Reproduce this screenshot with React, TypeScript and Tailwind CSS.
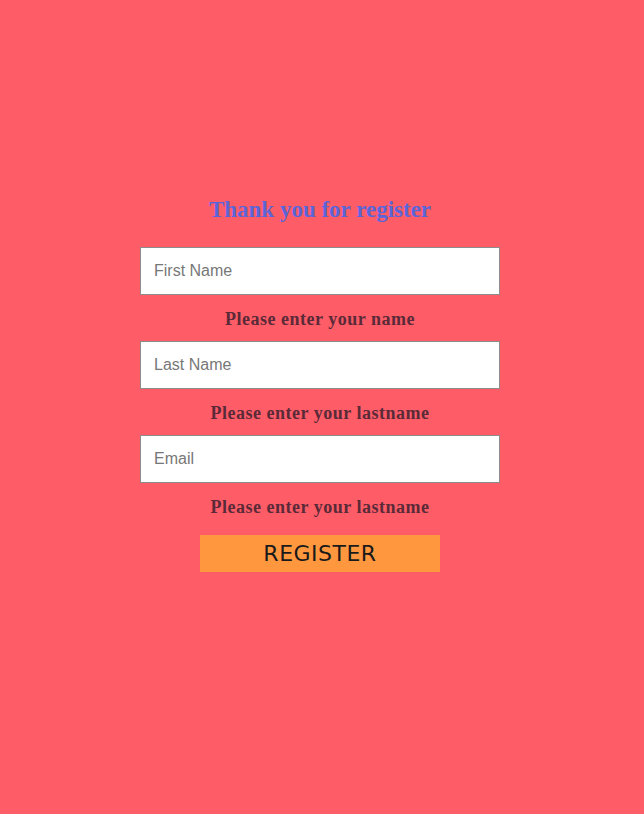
import React from 'react';

const fields = [
  { placeholder: 'First Name', hint: 'Please enter your name' },
  { placeholder: 'Last Name', hint: 'Please enter your lastname' },
  { placeholder: 'Email', hint: 'Please enter your lastname' },
];

export default function App() {
  return (
    <div className="min-h-[814px] w-full bg-[#fe5c67] flex flex-col items-center pt-[195px] pr-[4px]">
      <h1 className="font-['Liberation_Serif',serif] font-bold text-[23px] leading-[30px] text-[#5b65d8]">
        Thank you for register
      </h1>
      <form className="mt-[22px] flex flex-col items-center" onSubmit={(e) => e.preventDefault()}>
        {fields.map((f) => (
          <div key={f.placeholder} className="flex flex-col items-center">
            <input
              type="text"
              placeholder={f.placeholder}
              className="w-[360px] h-[48px] bg-white border border-[#8c8c8c] px-[13px] font-['Liberation_Sans',sans-serif] text-[16px] text-gray-800 placeholder:text-[#777] outline-none"
            />
            <p className="h-[46px] pt-[3px] flex items-center font-['Liberation_Serif',serif] font-bold text-[18px] tracking-[0.5px] text-[#5a2a38]">
              {f.hint}
            </p>
          </div>
        ))}
        <button
          type="submit"
          className="mt-[6px] w-[240px] h-[37px] bg-[#ff973f] font-['Comic_Sans_MS','DejaVu_Sans',cursive] text-[22px] tracking-[0.5px] text-[#1a1a1a]"
        >
          REGISTER
        </button>
      </form>
    </div>
  );
}
